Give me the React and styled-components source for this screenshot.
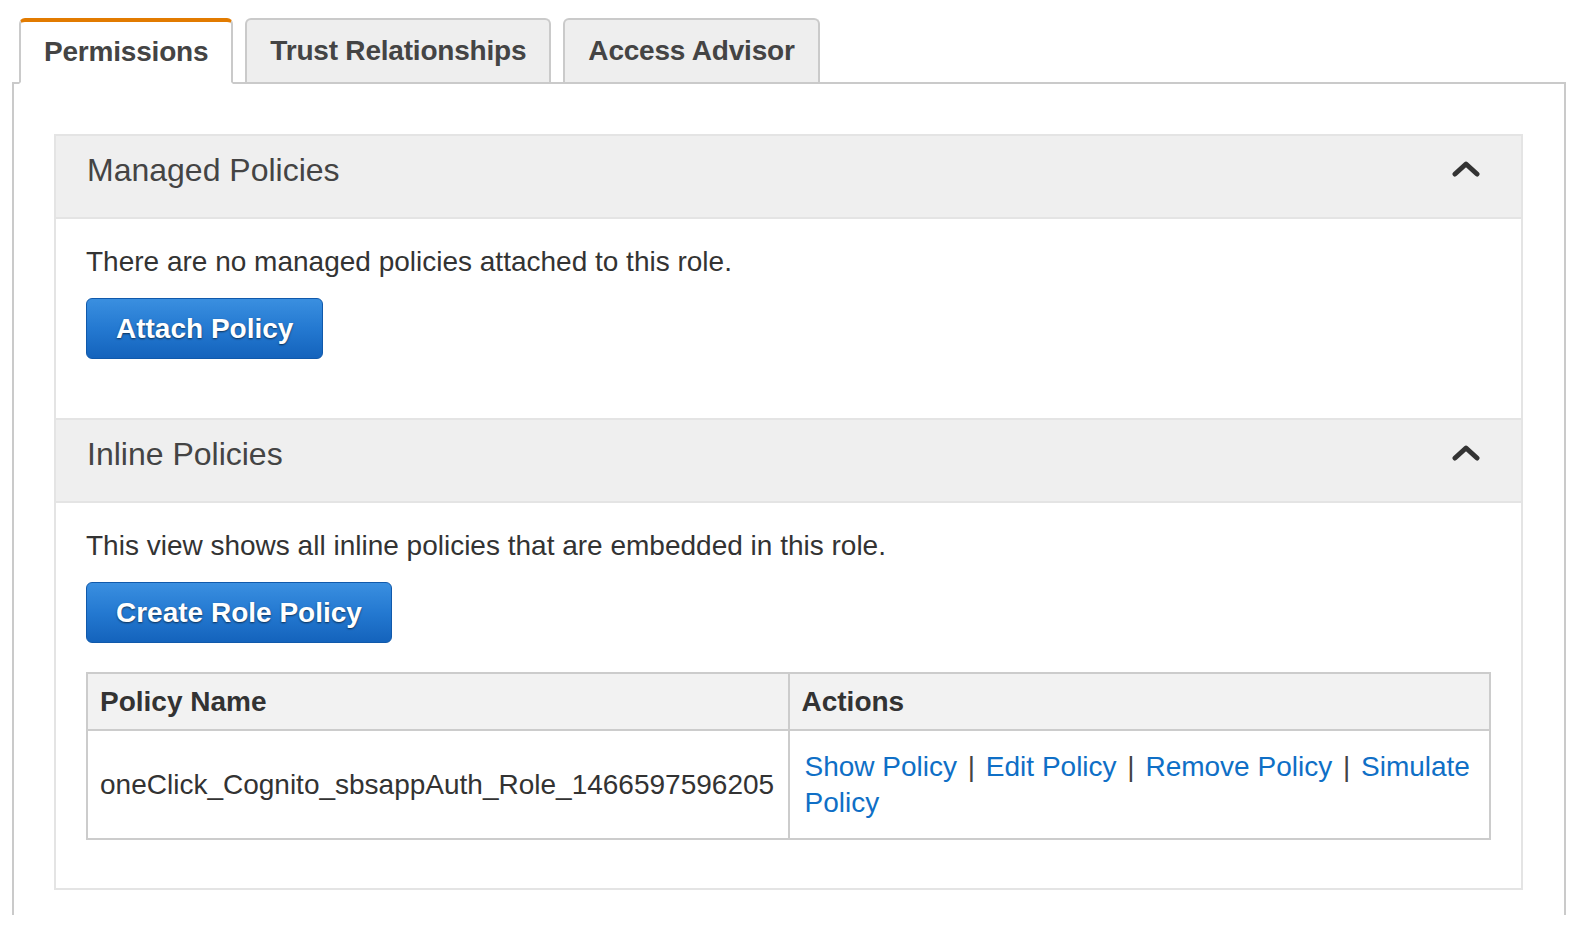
import React from 'react';
import styled, { createGlobalStyle } from 'styled-components';

const GlobalStyle = createGlobalStyle`
  body {
    margin: 0;
    background: #fff;
    font-family: "Liberation Sans", Arial, Helvetica, sans-serif;
    color: #333;
  }
`;

const Page = styled.div`
  padding: 18px 4px 0 12px;
`;

const TabList = styled.div`
  display: flex;
  gap: 12px;
  padding-left: 7px;
  margin-bottom: -2px;
  position: relative;
  z-index: 1;
`;

const Tab = styled.div`
  display: flex;
  align-items: center;
  height: ${p => (p.active ? '60px' : '62px')};
  padding: 0 23px;
  border: 2px solid #cacaca;
  border-top: ${p => (p.active ? '4px solid #e27b00' : '2px solid #cacaca')};
  border-bottom: ${p => (p.active ? '2px solid #fff' : 'none')};
  border-radius: 6px 6px 0 0;
  background: ${p => (p.active ? '#fff' : '#eeeeee')};
  font-size: 28px;
  font-weight: bold;
  letter-spacing: -0.2px;
  color: #444;
  cursor: pointer;
`;

const Panel = styled.div`
  border: 2px solid #cacaca;
  border-bottom: none;
  padding: 50px 41px 25px 40px;
`;

const Box = styled.div`
  border: 2px solid #e4e4e4;
`;

const SectionHeader = styled.div`
  display: flex;
  align-items: center;
  justify-content: space-between;
  height: 69px;
  padding: 0 41px 12px 31px;
  background: #efefef;
  border-top: ${p => (p.first ? 'none' : '2px solid #e4e4e4')};
  border-bottom: 2px solid #e4e4e4;
  font-size: 32px;
  color: #444;
`;

const SectionBody = styled.div`
  padding: 23px 30px ${p => p.bottom}px 30px;
`;

const Note = styled.p`
  margin: 0 0 16px 0;
  font-size: 28px;
  line-height: 40px;
  color: #333;
`;

const BlueButton = styled.button`
  display: block;
  height: 61px;
  padding: 0 29px;
  border: 1px solid #1059ab;
  border-radius: 6px;
  background: linear-gradient(to bottom, #3a8fe0 0%, #2479d1 50%, #1463bc 100%);
  font-family: "Liberation Sans", Arial, sans-serif;
  font-size: 28px;
  font-weight: bold;
  color: #fff;
  text-shadow: 0 1px 2px rgba(0, 0, 0, 0.6);
  cursor: pointer;
`;

const Table = styled.table`
  width: 100%;
  margin-top: 29px;
  border-collapse: collapse;
  border: 2px solid #cccccc;
  font-size: 28px;
`;

const Th = styled.th`
  width: 50%;
  height: 55px;
  padding: 0 12px;
  background: #f2f2f2;
  border: 2px solid #cccccc;
  text-align: left;
  font-weight: bold;
  color: #333;
`;

const Td = styled.td`
  padding: 18px 12px 17px ${p => (p.links ? 15 : 12)}px;
  border: 2px solid #cccccc;
  vertical-align: middle;
  line-height: 36px;
  color: #333;
`;

const ActionLink = styled.a`
  color: #0f6fc6;
  text-decoration: none;
  cursor: pointer;
`;

const Sep = styled.span`
  margin: 0 3px;
  color: #444;
`;

function Chevron() {
  return (
    <svg width="28" height="20" viewBox="0 0 28 20">
      <polyline
        points="3,13 14,3 25,13"
        fill="none"
        stroke="#333"
        strokeWidth="5"
        strokeLinecap="round"
        strokeLinejoin="round"
      />
    </svg>
  );
}

const actions = ['Show Policy', 'Edit Policy', 'Remove Policy', 'Simulate Policy'];

export default function App() {
  return (
    <Page>
      <GlobalStyle />
      <TabList>
        <Tab active>Permissions</Tab>
        <Tab>Trust Relationships</Tab>
        <Tab>Access Advisor</Tab>
      </TabList>
      <Panel>
        <Box>
          <SectionHeader first>
            Managed Policies
            <Chevron />
          </SectionHeader>
          <SectionBody bottom={59}>
            <Note>There are no managed policies attached to this role.</Note>
            <BlueButton>Attach Policy</BlueButton>
          </SectionBody>
          <SectionHeader>
            Inline Policies
            <Chevron />
          </SectionHeader>
          <SectionBody bottom={48}>
            <Note>This view shows all inline policies that are embedded in this role.</Note>
            <BlueButton>Create Role Policy</BlueButton>
            <Table>
              <thead>
                <tr>
                  <Th>Policy Name</Th>
                  <Th>Actions</Th>
                </tr>
              </thead>
              <tbody>
                <tr>
                  <Td>oneClick_Cognito_sbsappAuth_Role_1466597596205</Td>
                  <Td links>
                    {actions.map((a, i) => (
                      <React.Fragment key={a}>
                        {i > 0 && <Sep> | </Sep>}
                        <ActionLink>{a}</ActionLink>
                      </React.Fragment>
                    ))}
                  </Td>
                </tr>
              </tbody>
            </Table>
          </SectionBody>
        </Box>
      </Panel>
    </Page>
  );
}
